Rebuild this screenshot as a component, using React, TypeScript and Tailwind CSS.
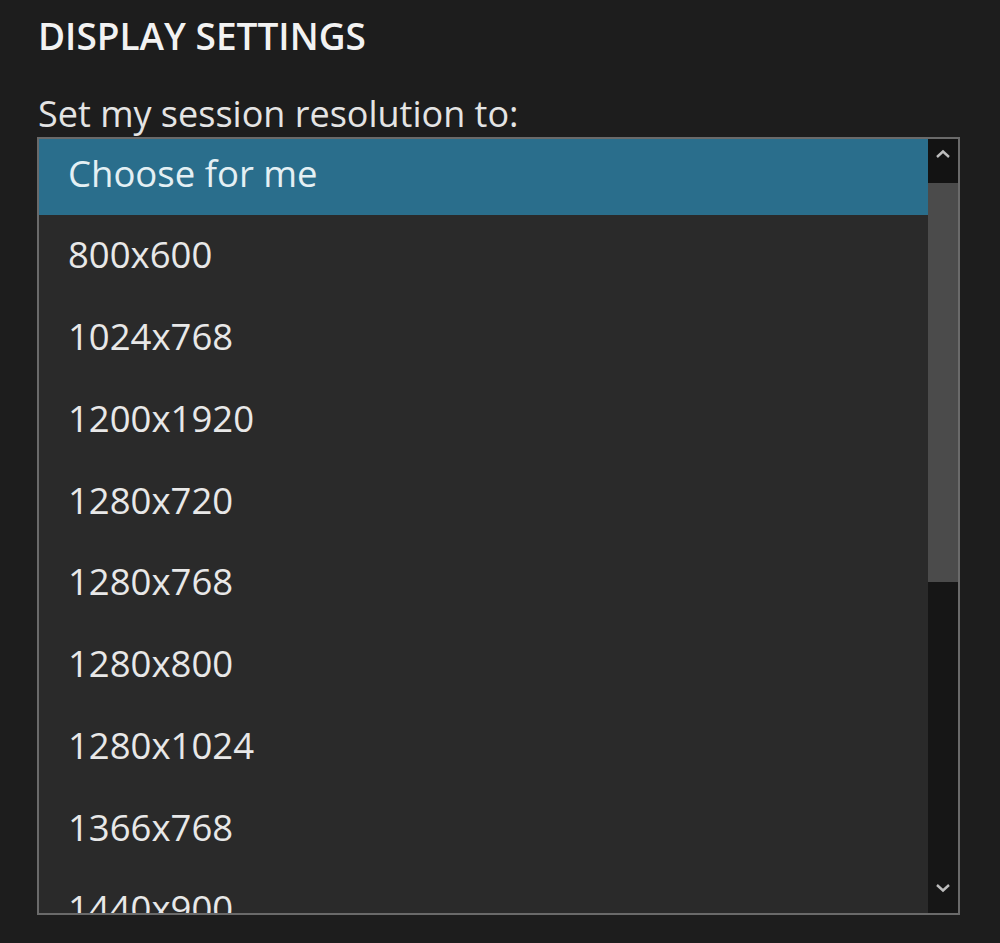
import React from "react";

const resolutions = [
  "Choose for me",
  "800x600",
  "1024x768",
  "1200x1920",
  "1280x720",
  "1280x768",
  "1280x800",
  "1280x1024",
  "1366x768",
  "1440x900",
];

export default function App() {
  return (
    <div
      className="w-[1000px] h-[943px] bg-[#1d1d1d] text-[#ececec] overflow-hidden pl-[37px] pt-[14px]"
      style={{ fontFamily: '"Open Sans", "Noto Sans", sans-serif' }}
    >
      <h2 className="text-[37px] leading-[44px] font-semibold text-[#f2f2f2] pl-[1px]">
        DISPLAY SETTINGS
      </h2>
      <p className="mt-[34px] text-[36px] leading-[44px] text-[#e4e4e4] pl-[1px]">
        Set my session resolution to:
      </p>

      <div className="mt-[1px] w-[923px] h-[778px] border-2 border-[#6a6a6a] bg-[#2a2a2a] flex overflow-hidden">
        <ul className="flex-1 overflow-hidden">
          {resolutions.map((r, i) => (
            <li
              key={r}
              className={
                i === 0
                  ? "h-[76px] mb-[5.75px] flex items-center pl-[29px] pb-[8px] text-[36.5px] bg-[#2a6e8c] text-[#e4f0f4]"
                  : "h-[76px] mb-[5.75px] flex items-center pl-[29px] pb-[8px] text-[36.5px] text-[#e8e8e8]"
              }
            >
              {r}
            </li>
          ))}
        </ul>

        <div className="w-[30px] flex flex-col bg-[#161616]">
          <div className="h-[44px] flex items-start justify-center pt-[10px] bg-[#131313]">
            <svg width="16" height="10" viewBox="0 0 16 10">
              <path d="M2 8 L8 2.5 L14 8" fill="none" stroke="#bdbdbd" strokeWidth="2.4" />
            </svg>
          </div>
          <div className="h-[399px] bg-[#4b4b4b]" />
          <div className="flex-1" />
          <div className="h-[36px] flex items-start justify-center pt-[6px]">
            <svg width="16" height="10" viewBox="0 0 16 10">
              <path d="M2 2 L8 7.5 L14 2" fill="none" stroke="#bdbdbd" strokeWidth="2.4" />
            </svg>
          </div>
        </div>
      </div>
    </div>
  );
}
